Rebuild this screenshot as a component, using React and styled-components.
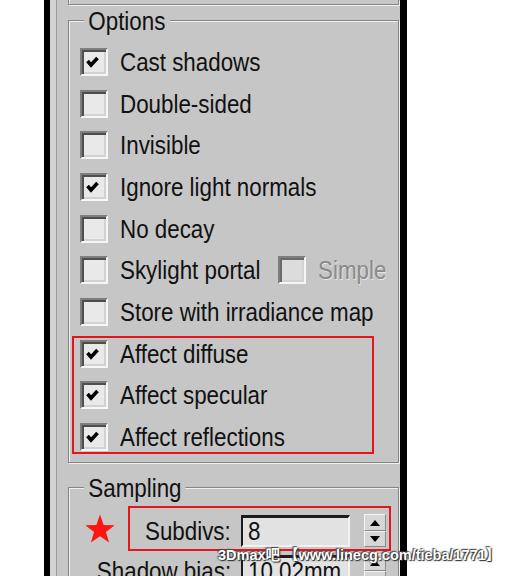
import React from "react";
import styled, { createGlobalStyle } from "styled-components";

const UI_FONT = `"Liberation Sans", Arial, sans-serif`;
const PANEL = "#c6c6c6";
const RED = "#e3161c";
// the dialog font is a tall, narrow bitmap face: squeeze Liberation Sans to match
const SQUEEZE = 0.86;

const GlobalStyle = createGlobalStyle`
  html, body {
    margin: 0;
    padding: 0;
    background: #fff;
    overflow: hidden;
  }
  body {
    font-family: ${UI_FONT};
    color: #111;
  }
`;

const options = [
  { label: "Cast shadows", checked: true },
  { label: "Double-sided" },
  { label: "Invisible" },
  { label: "Ignore light normals", checked: true },
  { label: "No decay" },
  { label: "Skylight portal", extra: "Simple" },
  { label: "Store with irradiance map" },
];

const affects = ["Affect diffuse", "Affect specular", "Affect reflections"];

const CheckBox = ({ checked, disabled, offset }) => (
  <Box $disabled={disabled} $offset={offset}>
    {checked && (
      <svg width="24" height="24" viewBox="0 0 24 24">
        <path
          d="M5.5 11 L9 15 L15.5 8"
          fill="none"
          stroke="#000"
          strokeWidth="3.6"
        />
      </svg>
    )}
  </Box>
);

const OptionRow = ({ label, checked, extra }) => (
  <Row>
    <CheckBox checked={checked} />
    <Label>{label}</Label>
    {extra && (
      <>
        <CheckBox disabled offset={-5} />
        <Label $disabled>{extra}</Label>
      </>
    )}
  </Row>
);

const Spinner = () => (
  <Spin>
    <SpinHalf>
      <Arrow $up />
    </SpinHalf>
    <SpinHalf>
      <Arrow />
    </SpinHalf>
  </Spin>
);

const App = () => {
  return (
    <Page>
      <GlobalStyle />
      <Frame>
        <Rollout>
          <TopBox />
          <Group $mt={15} $pt={20} $pb={4}>
            <Legend>Options</Legend>
            {options.map(o => (
              <OptionRow key={o.label} {...o} />
            ))}
            <Highlight>
              {affects.map(a => (
                <OptionRow key={a} label={a} checked />
              ))}
            </Highlight>
          </Group>
          <Group $mt={24} $pt={18} $pb={0}>
            <Legend>Sampling</Legend>
            <FieldRow $pl={16}>
              <Star width="30" height="29" viewBox="0 0 30 29">
                <polygon
                  points="15,0.5 18.65,10.98 29.74,11.21 20.9,17.92 24.11,28.54 15,22.2 5.89,28.54 9.1,17.92 0.26,11.21 11.35,10.98"
                  fill="#ff1414"
                />
              </Star>
              <RedFrame>
                <FieldLabel $w={101}>
                  <span>Subdivs:</span>
                </FieldLabel>
                <Input>
                  <span>8</span>
                </Input>
                <Spinner />
              </RedFrame>
            </FieldRow>
            <FieldRow $pl={0} $h={40}>
              <FieldLabel $w={162}>
                <span>Shadow bias:</span>
              </FieldLabel>
              <Input>
                <span>10.02mm</span>
              </Input>
              <Spinner />
            </FieldRow>
          </Group>
        </Rollout>
      </Frame>
      <Watermark>3Dmax吧 【www.linecg.com/tieba/1771】</Watermark>
    </Page>
  );
};

export default App;

const Page = styled.div`
  position: relative;
  width: 530px;
  height: 576px;
  overflow: hidden;
  background: #fff;
`;

const Frame = styled.div`
  margin-left: 44px;
  width: 363px;
  height: 576px;
  box-sizing: border-box;
  border-left: 6px solid #000;
  border-right: 7px solid #000;
  background: ${PANEL};
  box-shadow: inset 6px 0 0 #d2d2d2;
  display: flex;
`;

const Rollout = styled.div`
  flex: 1;
  min-width: 0;
  overflow: hidden;
  margin-left: 6px;
  border-left: 1px solid #9c9c9c;
  padding: 0 1px 0 11px;
  display: flex;
  flex-direction: column;
`;

const TopBox = styled.div`
  flex: none;
  height: 5px;
  box-sizing: border-box;
  border: 1px solid #858585;
  border-top: none;
  box-shadow: inset 1px 0 0 #efefef, 1px 1px 0 #efefef;
`;

const Group = styled.div`
  position: relative;
  flex: none;
  margin-top: ${p => p.$mt}px;
  padding: ${p => p.$pt}px 0 ${p => p.$pb}px;
  border: 1px solid #858585;
  box-shadow: inset 1px 1px 0 #efefef, 1px 1px 0 #efefef;
`;

const Legend = styled.span`
  position: absolute;
  top: -13px;
  left: 15px;
  padding: 0 5px;
  background: ${PANEL};
  font-size: 26px;
  line-height: 26px;
  white-space: nowrap;
  transform: scaleX(${SQUEEZE});
  transform-origin: 0 50%;
`;

const Row = styled.div`
  height: 41.7px;
  display: flex;
  align-items: center;
  padding-left: 11px;
`;

const Box = styled.span`
  flex: none;
  width: 28px;
  height: 28px;
  margin-left: ${p => p.$offset || 0}px;
  box-sizing: border-box;
  border: 2px solid;
  border-color: #7e7e7e #f6f6f6 #f6f6f6 #7e7e7e;
  box-shadow: inset 2px 2px 0 ${p => (p.$disabled ? "#6a6a6a" : "#4e4e4e")},
    inset -2px -2px 0 #d2d2d2;
  background: ${p => (p.$disabled ? "#dcdcdc" : "#e9e9e9")};
  display: block;
  svg {
    display: block;
  }
`;

const Label = styled.span`
  display: inline-block;
  margin-left: 12px;
  font-size: 26px;
  line-height: 1;
  white-space: nowrap;
  transform: scaleX(${SQUEEZE});
  transform-origin: 0 50%;
  color: ${p => (p.$disabled ? "#8a8a8a" : "#111")};
  text-shadow: ${p => (p.$disabled ? "1px 1px 0 #e6e6e6" : "none")};
`;

const Highlight = styled.div`
  position: relative;
  &::after {
    content: "";
    position: absolute;
    top: 3px;
    bottom: 4px;
    left: 3px;
    width: 302px;
    box-sizing: border-box;
    border: 2px solid ${RED};
    pointer-events: none;
  }
`;

const FieldRow = styled.div`
  display: flex;
  align-items: center;
  padding-left: ${p => p.$pl}px;
  height: ${p => (p.$h ? p.$h + "px" : "auto")};
`;

const Star = styled.svg`
  flex: none;
  display: block;
  margin-right: 13px;
`;

const RedFrame = styled.div`
  height: 45px;
  box-sizing: border-box;
  border: 2px solid ${RED};
  padding: 5px 3px 0 0;
  display: flex;
  align-items: center;
`;

const FieldLabel = styled.div`
  width: ${p => p.$w}px;
  flex: none;
  display: flex;
  justify-content: flex-end;
  margin-right: 10px;
  font-size: 26px;
  line-height: 1;
  white-space: nowrap;
  span {
    display: inline-block;
    transform: scaleX(${SQUEEZE});
    transform-origin: 100% 50%;
  }
`;

const Input = styled.div`
  width: 109px;
  height: 32px;
  flex: none;
  box-sizing: border-box;
  border-style: solid;
  border-width: 3px 2px 2px 2px;
  border-color: #1c1c1c #f2f2f2 #f2f2f2 #1c1c1c;
  background: #e2e2e2;
  padding-left: 5px;
  display: flex;
  align-items: center;
  font-size: 26px;
  line-height: 1;
  white-space: nowrap;
  overflow: hidden;
  span {
    display: inline-block;
    transform: scaleX(${SQUEEZE});
    transform-origin: 0 50%;
  }
`;

const Spin = styled.div`
  margin-left: 14px;
  width: 22px;
  height: 33px;
  flex: none;
  display: flex;
  flex-direction: column;
`;

const SpinHalf = styled.div`
  flex: 1;
  box-sizing: border-box;
  border: 1px solid;
  border-color: #f4f4f4 #8a8a8a #8a8a8a #f4f4f4;
  background: #d6d6d6;
  display: flex;
  align-items: center;
  justify-content: center;
`;

const Arrow = styled.span`
  width: 0;
  height: 0;
  border-left: 5px solid transparent;
  border-right: 5px solid transparent;
  border-${p => (p.$up ? "bottom" : "top")}: 6px solid #000;
`;

const Watermark = styled.div`
  position: absolute;
  left: 218px;
  top: 546px;
  font-family: "Liberation Sans", "Noto Sans CJK SC", sans-serif;
  font-weight: bold;
  font-size: 14.5px;
  line-height: 18px;
  color: #fff;
  white-space: nowrap;
  text-shadow: 0 0 2px #222, 1px 1px 1px #333, -1px -1px 1px #555;
`;
